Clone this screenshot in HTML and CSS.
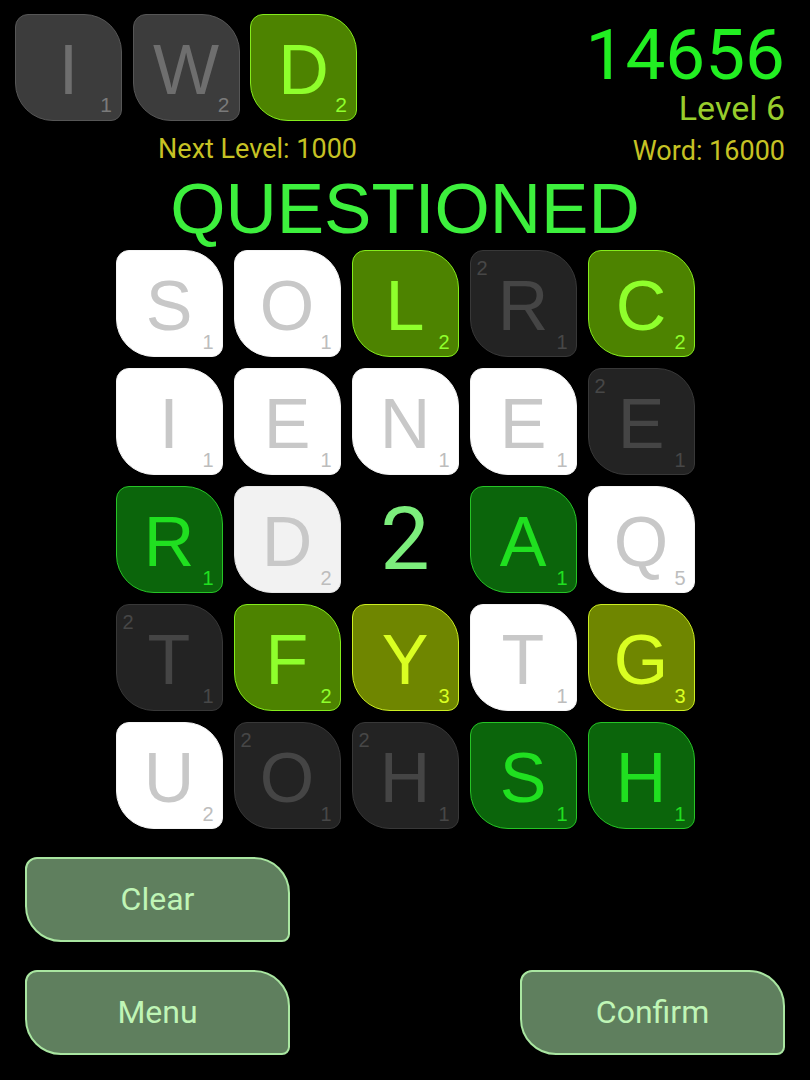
FILE: index.html
```html
<!DOCTYPE html>
<html lang="en">
<head>
<meta charset="utf-8">
<title>Word Game</title>
<link rel="stylesheet" href="styles.css">
</head>
<body>
<header class="top">
  <div class="word-col">
    <div class="word-tiles">
      <div class="tile wt t-grey"><span class="ch">I</span><span class="pts">1</span></div>
      <div class="tile wt t-grey"><span class="ch">W</span><span class="pts">2</span></div>
      <div class="tile wt t-lime"><span class="ch">D</span><span class="pts">2</span></div>
    </div>
    <div class="next">Next Level: 1000</div>
  </div>
  <div class="score-col">
    <div class="score">14656</div>
    <div class="level">Level 6</div>
    <div class="word">Word: 16000</div>
  </div>
</header>

<h1 class="title">QUESTIONED</h1>

<main class="board">
  <div class="tile t-white"><span class="ch">S</span><span class="pts">1</span></div>
  <div class="tile t-white"><span class="ch">O</span><span class="pts">1</span></div>
  <div class="tile t-lime"><span class="ch">L</span><span class="pts">2</span></div>
  <div class="tile t-dark"><span class="mult">2</span><span class="ch">R</span><span class="pts">1</span></div>
  <div class="tile t-lime"><span class="ch">C</span><span class="pts">2</span></div>

  <div class="tile t-white"><span class="ch">I</span><span class="pts">1</span></div>
  <div class="tile t-white"><span class="ch">E</span><span class="pts">1</span></div>
  <div class="tile t-white"><span class="ch">N</span><span class="pts">1</span></div>
  <div class="tile t-white"><span class="ch">E</span><span class="pts">1</span></div>
  <div class="tile t-dark"><span class="mult">2</span><span class="ch">E</span><span class="pts">1</span></div>

  <div class="tile t-green"><span class="ch">R</span><span class="pts">1</span></div>
  <div class="tile t-white t-sel"><span class="ch">D</span><span class="pts">2</span></div>
  <div class="bonus">2</div>
  <div class="tile t-green"><span class="ch">A</span><span class="pts">1</span></div>
  <div class="tile t-white"><span class="ch">Q</span><span class="pts">5</span></div>

  <div class="tile t-dark"><span class="mult">2</span><span class="ch">T</span><span class="pts">1</span></div>
  <div class="tile t-lime"><span class="ch">F</span><span class="pts">2</span></div>
  <div class="tile t-olive"><span class="ch">Y</span><span class="pts">3</span></div>
  <div class="tile t-white"><span class="ch">T</span><span class="pts">1</span></div>
  <div class="tile t-olive"><span class="ch">G</span><span class="pts">3</span></div>

  <div class="tile t-white"><span class="ch">U</span><span class="pts">2</span></div>
  <div class="tile t-dark"><span class="mult">2</span><span class="ch">O</span><span class="pts">1</span></div>
  <div class="tile t-dark"><span class="mult">2</span><span class="ch">H</span><span class="pts">1</span></div>
  <div class="tile t-green"><span class="ch">S</span><span class="pts">1</span></div>
  <div class="tile t-green"><span class="ch">H</span><span class="pts">1</span></div>
</main>

<footer class="controls">
  <button class="btn btn-clear">Clear</button>
  <button class="btn btn-menu">Menu</button>
  <button class="btn btn-confirm">Confirm</button>
</footer>
</body>
</html>
```

FILE: styles.css
```css
* { box-sizing: border-box; }

html, body {
  margin: 0;
  padding: 0;
  background: #000;
}

body {
  width: 810px;
  height: 1080px;
  overflow: hidden;
  font-family: Roboto, "Noto Sans", sans-serif;
}

/* ---------- header ---------- */
.top {
  display: flex;
  justify-content: space-between;
  align-items: flex-start;
  padding: 14px 25px 0 15px;
}

.word-col {
  display: flex;
  flex-direction: column;
  align-items: flex-end;
}

.word-tiles {
  display: flex;
  gap: 10.5px;
}

.next {
  margin-top: 15px;
  font-size: 27px;
  line-height: 1;
  color: #c6c224;
}

.score-col {
  display: flex;
  flex-direction: column;
  align-items: flex-end;
  padding-top: 4.5px;
}

.score {
  font-size: 71px;
  line-height: 1;
  color: #22ef22;
}

.level {
  margin-top: 1px;
  font-size: 34px;
  line-height: 1;
  color: #98cd2c;
}

.word {
  margin-top: 13px;
  font-size: 27px;
  line-height: 1;
  color: #c6c224;
}

/* ---------- title ---------- */
.title {
  margin: 8px 0 0;
  font-family: "Liberation Sans", Arial, sans-serif;
  font-weight: 400;
  font-size: 71px;
  line-height: 1;
  text-align: center;
  color: #3df03d;
}

/* ---------- board ---------- */
.board {
  display: grid;
  grid-template-columns: repeat(5, 107px);
  grid-auto-rows: 107px;
  gap: 11px;
  justify-content: center;
  margin-top: 6px;
}

.tile {
  position: relative;
  width: 107px;
  height: 107px;
  border: 1.5px solid transparent;
  border-radius: 13px 38px 11px 38px;
  display: flex;
  align-items: center;
  justify-content: center;
  padding-top: 5px;
  font-family: "Liberation Sans", Arial, sans-serif;
}

.ch {
  font-size: 70px;
  line-height: 1;
}

.pts {
  position: absolute;
  right: 8px;
  bottom: 4px;
  font-size: 20px;
  line-height: 1;
}

.mult {
  position: absolute;
  left: 6px;
  top: 7px;
  font-size: 20px;
  line-height: 1;
}

.wt .pts {
  font-size: 21px;
  right: 9px;
  bottom: 5px;
}

/* tile colour variants */
.t-white {
  background: #ffffff;
  border-color: #f4f4f4;
  color: #c8c8c8;
}
.t-white .pts { color: #bdbdbd; }

.t-sel {
  background: #f2f2f2;
  border-color: #e6e6e6;
}

.t-dark {
  background: #232323;
  border-color: #383838;
  color: #454545;
}
.t-dark .pts,
.t-dark .mult { color: #474747; }

.t-grey {
  background: #3c3c3c;
  border-color: #565656;
  color: #6e6e6e;
}
.t-grey .pts { color: #7a7a7a; }

.t-lime {
  background: #4d8300;
  border-color: #84ec1c;
  color: #8fff2c;
}

.t-green {
  background: #0b650b;
  border-color: #26c426;
  color: #20e020;
}

.t-olive {
  background: #6f8600;
  border-color: #ccee22;
  color: #daff22;
}

.bonus {
  display: flex;
  align-items: center;
  justify-content: center;
  font-family: Roboto, sans-serif;
  font-size: 88px;
  line-height: 1;
  color: #7cee7c;
}

/* ---------- controls ---------- */
.controls {
  display: grid;
  grid-template-columns: 265px 265px;
  grid-template-rows: 85px 85px;
  row-gap: 28px;
  justify-content: space-between;
  padding: 0 25px;
  margin-top: 28px;
}

.btn {
  display: flex;
  align-items: center;
  justify-content: center;
  margin: 0;
  padding: 0;
  border: 2px solid #a9e6a1;
  border-radius: 12px 36px 8px 36px;
  background: #5f7f5e;
  color: #bff5b6;
  font-family: Roboto, "Noto Sans", sans-serif;
  font-size: 32px;
  line-height: 1;
}

.btn-clear { grid-column: 1; grid-row: 1; }
.btn-menu { grid-column: 1; grid-row: 2; }
.btn-confirm { grid-column: 2; grid-row: 2; }
```
